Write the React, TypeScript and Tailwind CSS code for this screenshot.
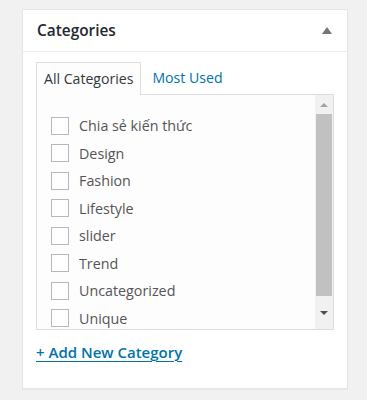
const categories = [
  "Chia sẻ kiến thức",
  "Design",
  "Fashion",
  "Lifestyle",
  "slider",
  "Trend",
  "Uncategorized",
  "Unique",
];

function Scrollbar() {
  return (
    <div className="flex w-[18px] shrink-0 flex-col items-center bg-[#f1f1f1]">
      <div className="flex h-[19px] w-full items-center justify-center">
        <div className="h-0 w-0 border-x-[4px] border-b-[4px] border-x-transparent border-b-[#a3a3a3]" />
      </div>
      <div className="h-[182px] w-[16px] bg-[#c1c1c1]" />
      <div className="flex flex-1 items-center justify-center">
        <div className="h-0 w-0 border-x-[4px] border-t-[4px] border-x-transparent border-t-[#505050]" />
      </div>
    </div>
  );
}

export default function App() {
  return (
    <div className="min-h-[400px] bg-[#f1f1f1] pl-[22px] pr-[20px] pt-[9px] font-['Open_Sans',sans-serif]">
      <div className="h-[380px] w-[326px] border border-[#e5e5e5] bg-white shadow-[0_1px_1px_rgba(0,0,0,0.04)]">
        <div className="flex h-[42px] items-center justify-between border-b border-[#eee] pl-[14px] pr-[15px]">
          <h2 className="text-[15.4px] font-semibold text-[#23282d]">Categories</h2>
          <div className="h-0 w-0 border-x-[5px] border-b-[7px] border-x-transparent border-b-[#72777c]" />
        </div>

        <div className="px-[13px] pt-[10px]">
          <div className="flex text-[14.1px]">
            <div className="relative z-10 -mb-px flex h-[33px] items-center border border-b-0 border-[#ddd] bg-[#fdfdfd] px-[7px] text-[#32373c]">
              All Categories
            </div>
            <button className="flex h-[32px] items-center px-[11px] text-[#0073aa]">Most Used</button>
          </div>

          <div className="flex h-[236px] overflow-hidden border border-[#ddd] bg-[#fdfdfd]">
            <ul className="flex-1 pl-[14px] pt-[17px]">
              {categories.map((name) => (
                <li key={name} className="flex h-[27.5px] items-center gap-[10px]">
                  <span className="h-[18px] w-[18px] shrink-0 border border-[#b4b9be] bg-white" />
                  <span className="text-[14.3px] text-[#555]">{name}</span>
                </li>
              ))}
            </ul>
            <Scrollbar />
          </div>

          <a
            href="#"
            className="mt-[11px] inline-block text-[15px] font-semibold text-[#0073aa] underline decoration-1 underline-offset-[3px]"
          >
            + Add New Category
          </a>
        </div>
      </div>
    </div>
  );
}
